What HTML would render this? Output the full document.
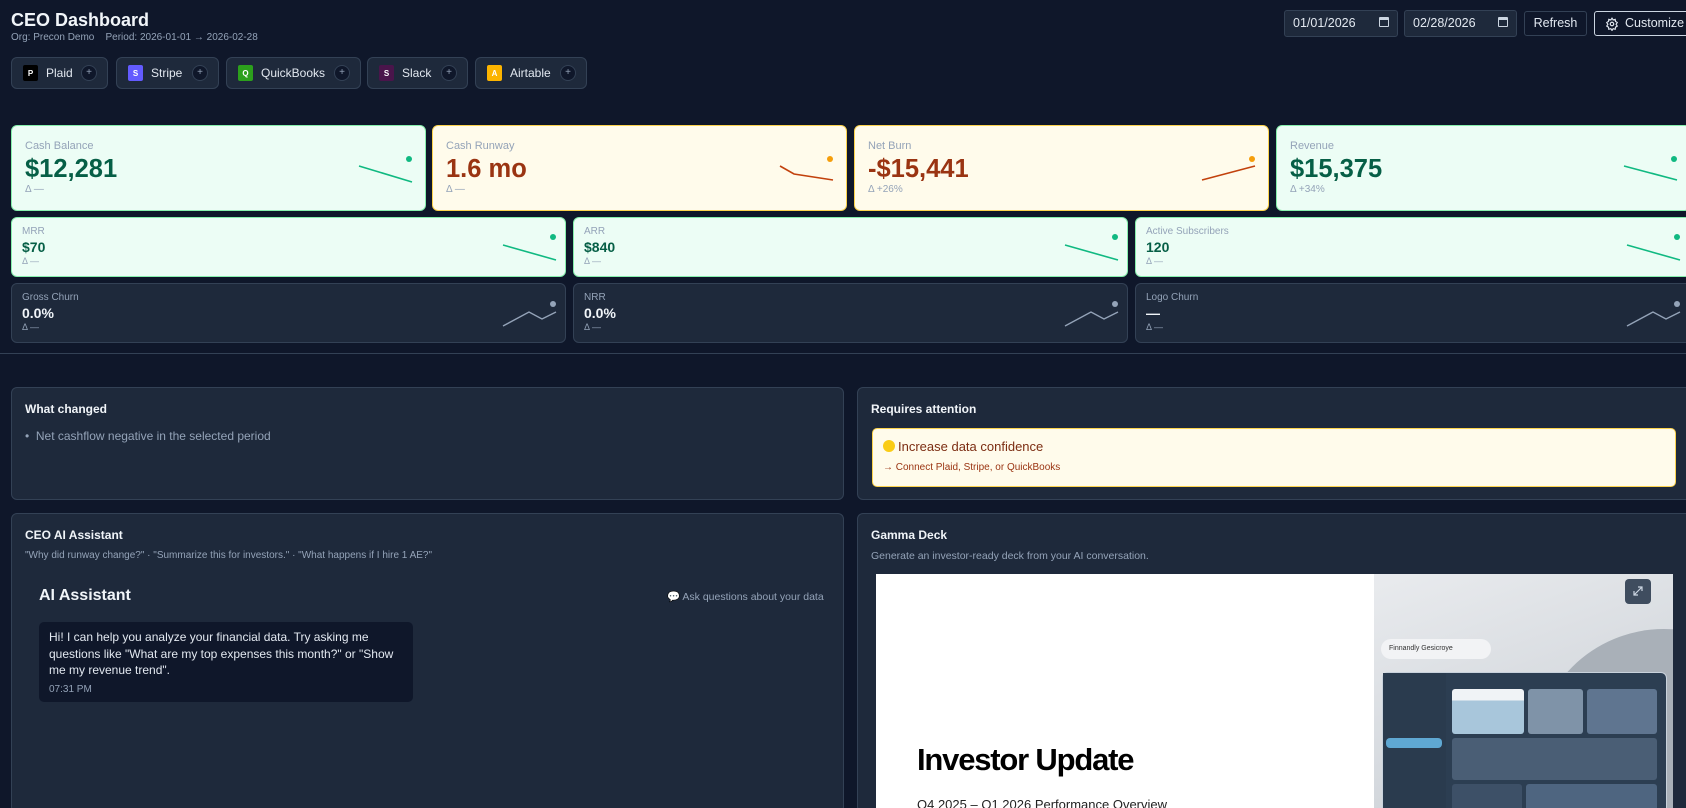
<!DOCTYPE html>
<html><head><meta charset="utf-8"><style>
*{box-sizing:border-box;margin:0;padding:0}
html,body{width:1686px;height:808px;overflow:hidden}
body{background:#0f172a;font-family:"Liberation Sans",Arial,sans-serif;color:#e2e8f0;position:relative}
.a{position:absolute}
.chip{position:absolute;top:57px;height:32px;background:#1e293b;border:1px solid #334155;border-radius:6px;display:flex;align-items:center;padding-left:11px;font-size:12px;color:#e2e8f0}
.chip .ic{width:15px;height:16px;border-radius:2px;font-size:8px;font-weight:bold;color:#fff;display:flex;align-items:center;justify-content:center;margin-right:8px}
.chip .pl{position:absolute;right:10px;top:7px;width:16px;height:16px;border-radius:50%;background:#0f172a;border:1px solid #334155;color:#94a3b8;font-size:10px;line-height:14px;text-align:center}
.card{position:absolute;border-radius:6px;border:1px solid}
.g{background:#ecfdf5;border-color:#86efac}
.y{background:#fffbeb;border-color:#fcd34d}
.d{background:#1e293b;border-color:#334155}
.lb{position:absolute;left:13px;top:14px;font-size:11px;color:#94a3b8}
.vl{position:absolute;left:13px;top:29px;font-size:25.5px;font-weight:bold}
.dl{position:absolute;left:13px;top:58px;font-size:10px;color:#94a3b8}
.s .lb{left:10px;top:8px;font-size:10px}
.s .vl{left:10px;top:21px;font-size:14px}
.s .dl{left:10px;top:38px;font-size:9px}
.card svg{position:absolute;left:0;top:0}
.panel{position:absolute;background:#1e293b;border:1px solid #334155;border-radius:6px}
.ph{position:absolute;left:13px;top:14px;font-size:12px;font-weight:bold;color:#f1f5f9}
.inp{position:absolute;top:10px;height:27px;background:#1e293b;border:1px solid #334155;border-radius:3px;font-size:12.5px;color:#e2e8f0;padding:5px 8px}
</style></head><body>
<div class="a" style="left:11px;top:10px;font-size:18px;font-weight:bold;color:#f1f5f9">CEO Dashboard</div>
<div class="a" style="left:11px;top:32px;font-size:10px;color:#94a3b8">Org: Precon Demo &nbsp;&nbsp; Period: 2026-01-01 → 2026-02-28</div>

<div class="chip" style="left:11px;width:97px"><span class="ic" style="background:#000">P</span>Plaid<span class="pl">+</span></div>
<div class="chip" style="left:116px;width:103px"><span class="ic" style="background:#635bff">S</span>Stripe<span class="pl">+</span></div>
<div class="chip" style="left:226px;width:135px"><span class="ic" style="background:#2ca01c">Q</span>QuickBooks<span class="pl">+</span></div>
<div class="chip" style="left:367px;width:101px"><span class="ic" style="background:#4a154b">S</span>Slack<span class="pl">+</span></div>
<div class="chip" style="left:475px;width:112px"><span class="ic" style="background:#fcb400">A</span>Airtable<span class="pl">+</span></div>

<div class="inp" style="left:1284px;width:114px">01/01/2026<span style="position:absolute;right:8px;top:6px;width:10px;height:10px;border:1.5px solid #cbd5e1;border-top-width:3px;border-radius:1px"></span></div>
<div class="inp" style="left:1404px;width:113px">02/28/2026<span style="position:absolute;right:8px;top:6px;width:10px;height:10px;border:1.5px solid #cbd5e1;border-top-width:3px;border-radius:1px"></span></div>
<div class="a" style="left:1524px;top:11px;width:63px;height:25px;border:1px solid #334155;border-radius:3px;font-size:12.5px;color:#e2e8f0;text-align:center;line-height:23px">Refresh</div>
<div class="a" style="left:1594px;top:11px;width:110px;height:25px;border:1px solid #cbd5e1;border-radius:3px;font-size:12.5px;color:#e2e8f0;line-height:23px;padding-left:30px">
<svg class="a" style="left:10px;top:5px" width="14" height="14" viewBox="0 0 24 24" fill="none" stroke="#e2e8f0" stroke-width="2"><circle cx="12" cy="12" r="3"/><path d="M12 2l2 3 3.5-1 .5 3.5 3 2-2 3 2 3-3 2-.5 3.5-3.5-1-2 3-2-3-3.5 1-.5-3.5-3-2 2-3-2-3 3-2 .5-3.5 3.5 1z"/></svg>Customize</div>

<div class="card g" style="left:11px;top:125px;width:415px;height:86px"><div class="lb">Cash Balance</div><div class="vl" style="color:#065f46">$12,281</div><div class="dl">Δ —</div>
<svg width="415" height="86"><path d="M347 40L400 56" stroke="#10b981" stroke-width="1.6"/><circle cx="397" cy="33" r="3" fill="#10b981"/></svg></div>
<div class="card y" style="left:432px;top:125px;width:415px;height:86px"><div class="lb">Cash Runway</div><div class="vl" style="color:#9a3412">1.6 mo</div><div class="dl">Δ —</div>
<svg width="415" height="86"><path d="M347 40L361 48L400 54" stroke="#c2410c" stroke-width="1.6" fill="none"/><circle cx="397" cy="33" r="3" fill="#f59e0b"/></svg></div>
<div class="card y" style="left:854px;top:125px;width:415px;height:86px"><div class="lb">Net Burn</div><div class="vl" style="color:#9a3412">-$15,441</div><div class="dl">Δ +26%</div>
<svg width="415" height="86"><path d="M347 54L400 40" stroke="#c2410c" stroke-width="1.6"/><circle cx="397" cy="33" r="3" fill="#f59e0b"/></svg></div>
<div class="card g" style="left:1276px;top:125px;width:415px;height:86px"><div class="lb">Revenue</div><div class="vl" style="color:#065f46">$15,375</div><div class="dl">Δ +34%</div>
<svg width="415" height="86"><path d="M347 40L400 54" stroke="#10b981" stroke-width="1.6"/><circle cx="397" cy="33" r="3" fill="#10b981"/></svg></div>

<div class="card g s" style="left:11px;top:217px;width:555px;height:60px"><div class="lb">MRR</div><div class="vl" style="color:#065f46">$70</div><div class="dl">Δ —</div>
<svg width="555" height="60"><path d="M491 27L544 42" stroke="#10b981" stroke-width="1.6"/><circle cx="541" cy="19" r="3" fill="#10b981"/></svg></div>
<div class="card g s" style="left:573px;top:217px;width:555px;height:60px"><div class="lb">ARR</div><div class="vl" style="color:#065f46">$840</div><div class="dl">Δ —</div>
<svg width="555" height="60"><path d="M491 27L544 42" stroke="#10b981" stroke-width="1.6"/><circle cx="541" cy="19" r="3" fill="#10b981"/></svg></div>
<div class="card g s" style="left:1135px;top:217px;width:560px;height:60px"><div class="lb">Active Subscribers</div><div class="vl" style="color:#065f46">120</div><div class="dl">Δ —</div>
<svg width="560" height="60"><path d="M491 27L544 42" stroke="#10b981" stroke-width="1.6"/><circle cx="541" cy="19" r="3" fill="#10b981"/></svg></div>

<div class="card d s" style="left:11px;top:283px;width:555px;height:60px"><div class="lb">Gross Churn</div><div class="vl" style="color:#f1f5f9">0.0%</div><div class="dl">Δ —</div>
<svg width="555" height="60"><path d="M491 42L517 28L530 35L544 28" stroke="#94a3b8" stroke-width="1.4" fill="none"/><circle cx="541" cy="20" r="3" fill="#94a3b8"/></svg></div>
<div class="card d s" style="left:573px;top:283px;width:555px;height:60px"><div class="lb">NRR</div><div class="vl" style="color:#f1f5f9">0.0%</div><div class="dl">Δ —</div>
<svg width="555" height="60"><path d="M491 42L517 28L530 35L544 28" stroke="#94a3b8" stroke-width="1.4" fill="none"/><circle cx="541" cy="20" r="3" fill="#94a3b8"/></svg></div>
<div class="card d s" style="left:1135px;top:283px;width:560px;height:60px"><div class="lb">Logo Churn</div><div class="vl" style="color:#f1f5f9">—</div><div class="dl">Δ —</div>
<svg width="560" height="60"><path d="M491 42L517 28L530 35L544 28" stroke="#94a3b8" stroke-width="1.4" fill="none"/><circle cx="541" cy="20" r="3" fill="#94a3b8"/></svg></div>

<div class="a" style="left:0;top:353px;width:1686px;height:1px;background:#334155"></div>

<div class="panel" style="left:11px;top:387px;width:833px;height:113px"><div class="ph">What changed</div>
<div class="a" style="left:13px;top:41px;font-size:12px;color:#94a3b8">• &nbsp;Net cashflow negative in the selected period</div></div>
<div class="panel" style="left:857px;top:387px;width:840px;height:113px"><div class="ph">Requires attention</div>
<div class="a" style="left:14px;top:40px;width:804px;height:59px;background:#fffbeb;border:1px solid #fcd34d;border-radius:5px">
<div class="a" style="left:10px;top:10px;font-size:13px;color:#7c2d12"><span style="display:inline-block;width:12px;height:12px;border-radius:50%;background:#facc15;vertical-align:-1px;margin-right:3px"></span>Increase data confidence</div>
<div class="a" style="left:10px;top:33px;font-size:10px;color:#9a3412">→ Connect Plaid, Stripe, or QuickBooks</div></div></div>

<div class="panel" style="left:11px;top:513px;width:833px;height:300px"><div class="ph">CEO AI Assistant</div>
<div class="a" style="left:13px;top:36px;font-size:10px;color:#94a3b8">"Why did runway change?" · "Summarize this for investors." · "What happens if I hire 1 AE?"</div>
<div class="a" style="left:27px;top:73px;font-size:16px;font-weight:bold;color:#f1f5f9">AI Assistant</div>
<div class="a" style="left:655px;top:76px;font-size:10.5px;color:#94a3b8">💬 Ask questions about your data</div>
<div class="a" style="left:27px;top:108px;width:374px;height:80px;background:#0f172a;border-radius:5px;padding:7px 10px;font-size:12px;line-height:16.5px;color:#e2e8f0">Hi! I can help you analyze your financial data. Try asking me questions like "What are my top expenses this month?" or "Show me my revenue trend".<div style="font-size:10px;color:#94a3b8;margin-top:3px">07:31 PM</div></div></div>

<div class="panel" style="left:857px;top:513px;width:840px;height:300px"><div class="ph">Gamma Deck</div>
<div class="a" style="left:13px;top:36px;font-size:10.5px;color:#94a3b8">Generate an investor-ready deck from your AI conversation.</div></div>

<div class="a" style="left:876px;top:574px;width:797px;height:234px;background:#fff;overflow:hidden">
<div class="a" style="left:41px;top:168px;font-size:31px;font-weight:bold;color:#000;letter-spacing:-1.2px">Investor Update</div>
<div class="a" style="left:41px;top:223px;font-size:13px;color:#222">Q4 2025 – Q1 2026 Performance Overview</div>
<div class="a" style="left:498px;top:0;width:299px;height:240px;background:linear-gradient(160deg,#e9ebee,#d5d9de 60%,#c7ccd2);overflow:hidden">
<div class="a" style="left:160px;top:55px;width:260px;height:260px;border-radius:50%;background:#a9b0b8"></div>
<div class="a" style="left:7px;top:65px;width:110px;height:20px;border-radius:10px;background:#f2f3f5;font-size:7px;color:#333;padding:6px 8px">Finnandly Gesicroye</div>
<div class="a" style="left:8px;top:98px;width:285px;height:150px;border-radius:6px;background:#2c3e52;border:1px solid #c9d2dc">
<div class="a" style="left:0;top:0;width:63px;height:150px;background:#2a3b4e"></div>
<div class="a" style="left:3px;top:65px;width:56px;height:10px;border-radius:4px;background:#5fa8d3"></div>
<div class="a" style="left:69px;top:16px;width:72px;height:45px;border-radius:3px;background:linear-gradient(#f0f3f6 25%,#a8c6db 25%)"></div>
<div class="a" style="left:145px;top:16px;width:55px;height:45px;border-radius:3px;background:#7f93a8"></div>
<div class="a" style="left:204px;top:16px;width:70px;height:45px;border-radius:3px;background:#5f7590"></div>
<div class="a" style="left:69px;top:65px;width:205px;height:42px;border-radius:3px;background:#4a5e75"></div>
<div class="a" style="left:69px;top:111px;width:70px;height:40px;border-radius:3px;background:#3d5067"></div>
<div class="a" style="left:143px;top:111px;width:131px;height:40px;border-radius:3px;background:#4e6580"></div>
</div>
<div class="a" style="left:251px;top:5px;width:26px;height:25px;border-radius:4px;background:#3f4d5f"><svg width="26" height="25"><path d="M9 16L17 8M13 8h4v4M9 12v4h4" stroke="#cbd5e1" stroke-width="1.2" fill="none"/></svg></div>
</div></div>
</body></html>
